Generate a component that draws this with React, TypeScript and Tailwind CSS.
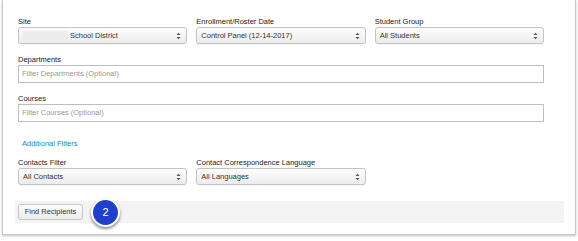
import React from "react";

function Arrows() {
  return (
    <svg width="5" height="8" viewBox="0 0 5 8" className="shrink-0">
      <path d="M0.5 3 L2.5 0.8 L4.5 3 Z" fill="#555" />
      <path d="M0.5 5 L2.5 7.2 L4.5 5 Z" fill="#555" />
    </svg>
  );
}

function Select({ children }: { children: React.ReactNode }) {
  return (
    <div className="flex h-[17px] items-center justify-between rounded-[3px] border border-[#c4c4c4] bg-gradient-to-b from-[#fdfdfd] to-[#ececec] pl-[4px] pr-[5px] text-[7.5px] text-[#333] shadow-[0_1px_0_rgba(0,0,0,0.04)]">
      <div className="flex items-center">{children}</div>
      <Arrows />
    </div>
  );
}

function Label({ children }: { children: React.ReactNode }) {
  return (
    <div className="h-[10px] text-[7.5px] leading-[10px] text-[#222]">
      {children}
    </div>
  );
}

function TextInput({ placeholder }: { placeholder: string }) {
  return (
    <div className="flex h-[18px] items-center border border-[#bdbdbd] bg-white pl-[3px] text-[7.5px] text-[#999]">
      {placeholder}
    </div>
  );
}

export default function App() {
  return (
    <div
      className="h-[241px] w-[578px] overflow-hidden bg-white"
      style={{ fontFamily: '"Liberation Sans", Arial, sans-serif' }}
    >
      <div className="ml-[2px] h-[235px] w-[574px] border-x border-b border-[#c9c9c9] bg-white pt-[17px] shadow-[0_1px_2px_rgba(0,0,0,0.25)]">
        <div className="w-[541px] pl-[15px]">
          <div className="grid grid-cols-3 gap-x-[9px]">
            <div>
              <Label>Site</Label>
              <Select>
                <span className="mr-[2px] h-[9px] w-[45px] bg-[#ececec]" />
                <span>School District</span>
              </Select>
            </div>
            <div>
              <Label>Enrollment/Roster Date</Label>
              <Select>Control Panel (12-14-2017)</Select>
            </div>
            <div>
              <Label>Student Group</Label>
              <Select>All Students</Select>
            </div>
          </div>

          <div className="mt-[11px]">
            <Label>Departments</Label>
            <TextInput placeholder="Filter Departments (Optional)" />
          </div>

          <div className="mt-[11px]">
            <Label>Courses</Label>
            <TextInput placeholder="Filter Courses (Optional)" />
          </div>

          <div className="mt-[17px] pl-[4px] text-[7.5px] leading-[10px] text-[#2a7fc1]">
            Additional Filters
          </div>

          <div className="mt-[9px] grid grid-cols-3 gap-x-[9px]">
            <div>
              <Label>Contacts Filter</Label>
              <Select>All Contacts</Select>
            </div>
            <div>
              <Label>Contact Correspondence Language</Label>
              <Select>All Languages</Select>
            </div>
          </div>
        </div>

        <div className="mt-[16px] ml-[12px] flex h-[22px] w-[549px] items-center bg-[#f3f3f3] pl-[3px]">
          <div className="flex h-[16px] w-[65px] items-center justify-center rounded-[3px] border border-[#c6c6c6] bg-gradient-to-b from-[#fdfdfd] to-[#ececec] text-[7.5px] text-[#333]">
            Find Recipients
          </div>
          <div className="relative ml-[8px] flex h-[29px] w-[29px] items-center justify-center rounded-full border-[2px] border-white bg-[#1f3fcc] text-[11px] text-white shadow-[0_2px_3px_rgba(0,0,0,0.45)]">
            2
          </div>
        </div>
      </div>
    </div>
  );
}
